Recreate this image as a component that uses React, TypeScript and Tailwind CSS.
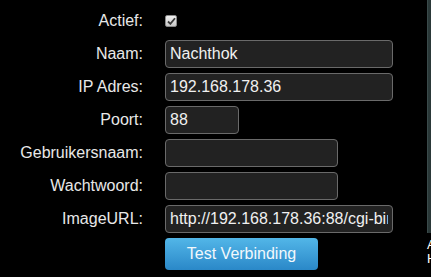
const rows = [
  { label: "Naam:", value: "Nachthok", w: "w-[228px]" },
  { label: "IP Adres:", value: "192.168.178.36", w: "w-[228px]" },
  { label: "Poort:", value: "88", w: "w-[74px]" },
  { label: "Gebruikersnaam:", value: "", w: "w-[173px]" },
  { label: "Wachtwoord:", value: "", w: "w-[173px]" },
  { label: "ImageURL:", value: "http://192.168.178.36:88/cgi-bin/CGIProxy.fcgi", w: "w-[228px]" },
];

export default function App() {
  return (
    <div className="flex h-[277px] w-[431px] overflow-hidden bg-black font-['Liberation_Sans',Arial,sans-serif] text-[16px] text-[#e8e8e8]">
      {/* form */}
      <div className="w-[427px] shrink-0 pt-[4px]">
        <div className="flex h-[33px] items-center">
          <div className="w-[143px] text-right">Actief:</div>
          <div className="ml-[22px] mt-[1px] flex h-[12px] w-[12px] items-center justify-center rounded-[2px] border border-[#8a8a8a] bg-gradient-to-b from-[#f0f0f0] to-[#c8c8c8]">
            <svg width="9" height="8" viewBox="0 0 9 8">
              <path d="M1 4.5 L3.4 6.8 L8 1.2" fill="none" stroke="#3a3a3a" strokeWidth="1.8" />
            </svg>
          </div>
        </div>

        {rows.map((r) => (
          <div key={r.label} className="flex h-[33px] items-center">
            <div className="w-[143px] text-right">{r.label}</div>
            <input
              readOnly
              value={r.value}
              className={`ml-[22px] h-[28px] ${r.w} rounded-[4px] border border-[#6a6a6a] bg-[#222222] px-[4px] text-[16px] text-[#f0f0f0] outline-none`}
            />
          </div>
        ))}

        <div className="flex pt-[3px]">
          <button className="ml-[165px] h-[32px] w-[153px] rounded-[4px] bg-gradient-to-b from-[#52b6e8] to-[#2a88c8] text-[16px] text-[#f2f8fc]">
            Test Verbinding
          </button>
        </div>
      </div>

      {/* side panel, mostly off screen */}
      <div className="w-[200px] shrink-0">
        <div className="h-[233px] border-l border-[#3a4a4a] bg-[#2a3838]"></div>
        <div className="pt-[5px] text-[13px] leading-[14px] text-white">
          <div>Als de verbinding lukt</div>
          <div>Het beeld verschijnt hier</div>
        </div>
      </div>
    </div>
  );
}
